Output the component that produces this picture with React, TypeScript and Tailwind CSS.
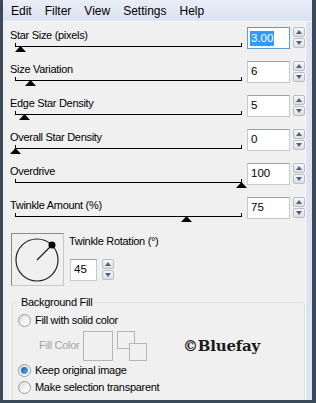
import React from 'react'

const sliders = [
  { label: 'Star Size (pixels)', value: '3.00', pos: 5, focused: true },
  { label: 'Size Variation', value: '6', pos: 15 },
  { label: 'Edge Star Density', value: '5', pos: 9 },
  { label: 'Overall Star Density', value: '0', pos: 0 },
  { label: 'Overdrive', value: '100', pos: 226 },
  { label: 'Twinkle Amount (%)', value: '75', pos: 171 },
]

const menu = ['Edit', 'Filter', 'View', 'Settings', 'Help']

function Spin() {
  return (
    <div className="flex flex-col gap-[1px] w-[12px]">
      {[0, 1].map((i) => (
        <div
          key={i}
          className="h-[10px] flex items-center justify-center rounded-[2px] border border-[#b9bcc2] bg-gradient-to-b from-[#f7f7f7] to-[#dedede]"
        >
          <svg width="6" height="4" viewBox="0 0 6 4">
            <polygon points={i === 0 ? '0,4 6,4 3,0' : '0,0 6,0 3,4'} fill="#4d6185" />
          </svg>
        </div>
      ))}
    </div>
  )
}

function NumBox({ value, focused, width }: { value: string; focused?: boolean; width: string }) {
  return (
    <div
      className={`${width} h-[22px] bg-white border flex items-center pl-[2px] text-[11.5px] text-black ${
        focused ? 'border-[#5f9bd3]' : 'border-[#c6cad0] border-t-[#9ca0a8]'
      }`}
    >
      {focused ? <span className="bg-[#3399ff] text-white leading-[15px] px-[1px]">{value}</span> : <span className="pl-[1px]">{value}</span>}
    </div>
  )
}

function Radio({ checked, label }: { checked?: boolean; label: string }) {
  return (
    <div className="h-[17px] flex items-center gap-[4px]">
      <div className="w-[13px] h-[13px] rounded-full border border-[#9a9a9a] bg-gradient-to-br from-[#d6d6d6] via-[#f2f2f2] to-white flex items-center justify-center">
        {checked && <div className="w-[7px] h-[7px] rounded-full bg-gradient-to-br from-[#16599f] to-[#5fb4f2]" />}
      </div>
      <span>{label}</span>
    </div>
  )
}

export default function App() {
  return (
    <div
      className="w-[316px] h-[403px] bg-[#3b4959] pl-[3px] pr-[4px] pb-[3px] flex flex-col text-[11px] text-black"
      style={{ fontFamily: '"Liberation Sans", Arial, sans-serif' }}
    >
      <div className="flex-1 flex flex-col bg-[#f0f0f0] overflow-hidden">
        <div className="h-[22px] shrink-0 flex items-center gap-[13px] pl-[8px] pt-[1px] text-[12px] bg-gradient-to-b from-[#e9edf7] to-[#dbe2f0] border-b border-[#f4f6fb]">
          {menu.map((m) => (
            <span key={m}>{m}</span>
          ))}
        </div>
        <div className="flex flex-1 min-h-0">
          <div className="flex-1 flex flex-col overflow-hidden tracking-[-0.3px]">
            {sliders.map((s) => (
              <div key={s.label} className="h-[34px] shrink-0 flex">
                <div className="w-[245px] flex flex-col">
                  <div className="pl-[7px] pt-[7px] leading-[13px]">{s.label}</div>
                  <div className="relative ml-[12px] w-[227px] h-[4px] mt-[1px] border-l border-r border-b border-black">
                    <svg
                      width="11"
                      height="6"
                      viewBox="0 0 11 6"
                      className="absolute top-[3px]"
                      style={{ left: s.pos - 6 }}
                    >
                      <polygon points="0,6 11,6 5.5,0" fill="#000" />
                    </svg>
                  </div>
                </div>
                <div className="flex gap-[3px] mt-[5px] h-[22px] tracking-normal">
                  <NumBox value={s.value} focused={s.focused} width="w-[43px]" />
                  <Spin />
                </div>
              </div>
            ))}

            <div className="flex shrink-0">
              <div className="ml-[8px] mt-[7px] w-[53px] h-[53px] border border-[#8a8a8a] border-r-[#c8c8c8] border-b-[#c8c8c8]">
                <svg width="51" height="51" viewBox="0 0 51 51">
                  <circle cx="25" cy="26" r="21" fill="none" stroke="#222" strokeWidth="1.2" />
                  <line x1="25" y1="26" x2="39.5" y2="11.5" stroke="#222" strokeWidth="1.2" />
                  <circle cx="40" cy="11" r="3.5" fill="#000" />
                </svg>
              </div>
              <div className="ml-[5px] flex flex-col">
                <div className="mt-[8.5px] leading-[13px]">Twinkle Rotation (°)</div>
                <div className="mt-[11.5px] ml-[1px] flex gap-[5px] h-[22px] tracking-normal">
                  <NumBox value="45" width="w-[27px]" />
                  <Spin />
                </div>
              </div>
            </div>

            <fieldset className="ml-[9px] mt-[10px] shrink-0 h-[120px] border border-[#d5dfe5] rounded-[3px] pl-[5px]">
              <legend className="ml-[1px] px-[2px] leading-[13px]">Background Fill</legend>
              <div className="mt-[3px]">
                <Radio label="Fill with solid color" />
              </div>
              <div className="mt-[1.5px] flex items-center h-[30px]">
                <span className="ml-[21px] text-[#a3a3a3] w-[44px]">Fill Color</span>
                <div className="w-[30px] h-[30px] border border-[#b5b5b5]" />
                <div className="ml-[4px] relative w-[30px] h-[30px]">
                  <div className="absolute left-0 top-0 w-[18px] h-[18px] border border-[#b5b5b5] bg-[#f0f0f0]" />
                  <div className="absolute left-[12px] top-[12px] w-[18px] h-[18px] border border-[#b5b5b5] bg-[#f0f0f0]" />
                </div>
                <span
                  className="ml-[36px] mt-[2px] text-[15px] font-bold text-[#1a1a1a] tracking-[-0.2px]"
                  style={{ fontFamily: '"DejaVu Serif", serif' }}
                >
                  ©Bluefay
                </span>
              </div>
              <div className="mt-[1.5px]">
                <Radio checked label="Keep original image" />
              </div>
              <Radio label="Make selection transparent" />
            </fieldset>
          </div>
          <div className="w-[7px] shrink-0 bg-[#dae5f0] border-l border-white" />
        </div>
      </div>
    </div>
  )
}
